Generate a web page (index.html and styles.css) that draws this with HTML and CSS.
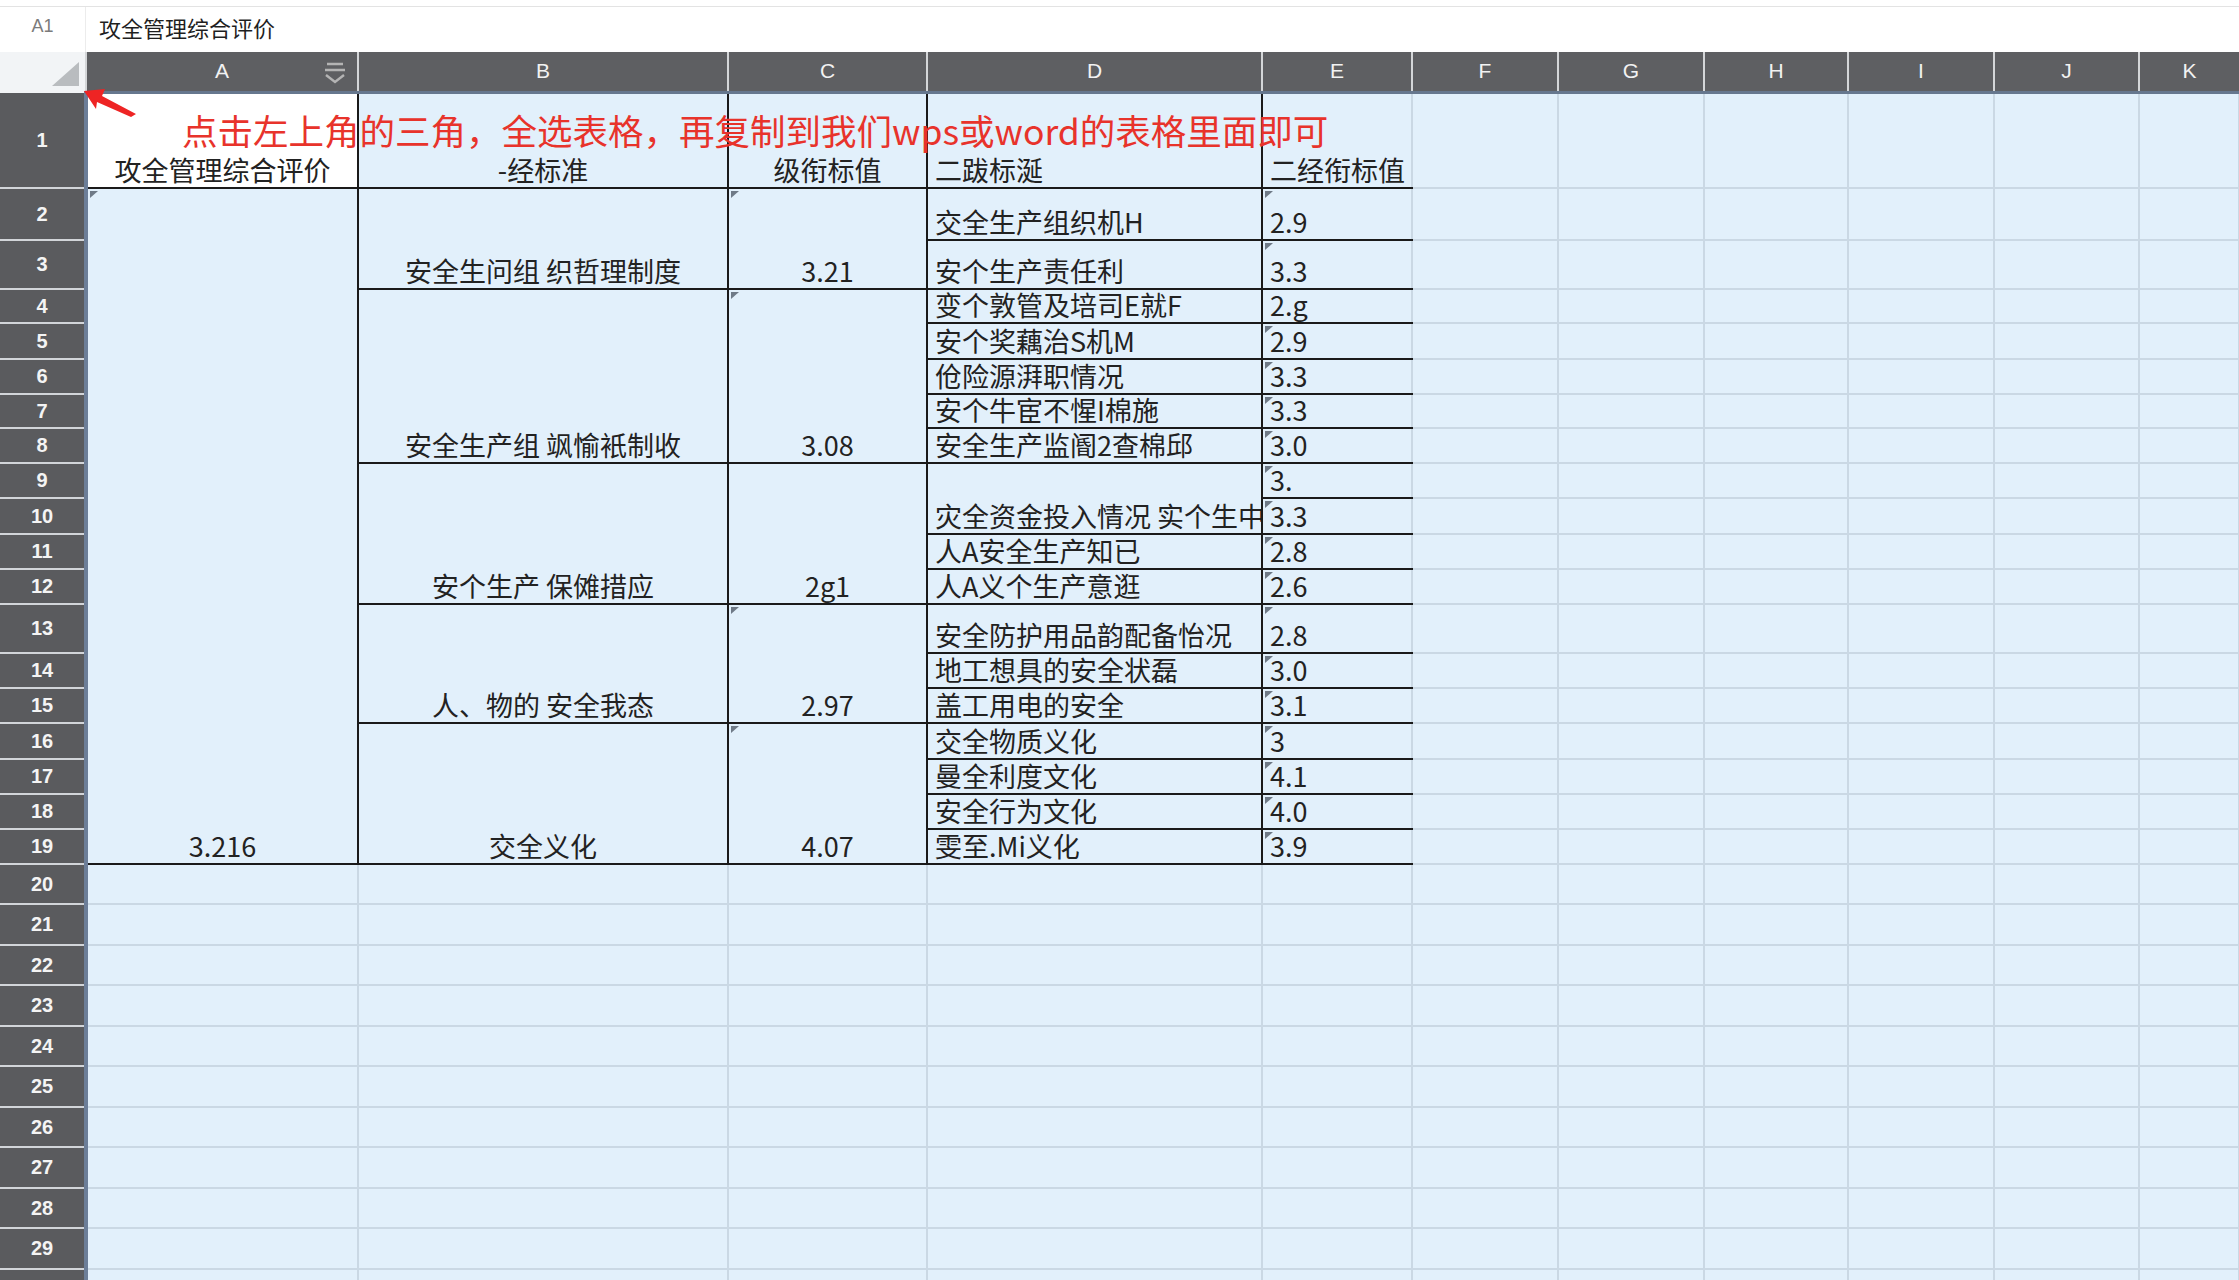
FILE: index.html
```html
<!DOCTYPE html>
<html lang="zh-CN">
<head>
<meta charset="utf-8">
<title>表格</title>
<link rel="stylesheet" href="styles.css">
</head>
<body>
<div class="topline"></div>
<div class="fbar">
  <div class="namebox">A1</div>
  <div class="formula">攻全管理综合评价</div>
</div>
<table class="sheet">
  <colgroup>
    <col class="w-rh"><col class="w-a"><col class="w-b"><col class="w-c"><col class="w-d"><col class="w-e">
    <col class="w-f"><col class="w-g"><col class="w-h"><col class="w-i"><col class="w-j"><col class="w-k">
  </colgroup>
  <thead>
    <tr class="hdr">
      <th class="corner"><span class="corner-tri"></span></th>
      <th class="ch ch-a">A
        <svg class="filter" viewBox="0 0 24 22" width="24" height="22"><path d="M4 2h16M2 8h20M3 13l9 7 9-7" fill="none" stroke="#b4b4b4" stroke-width="2.4"/></svg>
      </th>
      <th class="ch">B</th><th class="ch">C</th><th class="ch">D</th><th class="ch">E</th><th class="ch">F</th>
      <th class="ch">G</th><th class="ch">H</th><th class="ch">I</th><th class="ch">J</th><th class="ch">K</th>
    </tr>
  </thead>
  <tbody>
    <tr class="r96"><th class="rh">1</th><td class="k ctr active">攻全管理综合评价</td><td class="k ctr">-经标准</td><td class="k ctr">级衔标值</td><td class="k">二跋标涎</td><td class="kb">二经衔标值</td><td></td><td></td><td></td><td></td><td></td><td></td></tr>
    <tr class="r52"><th class="rh">2</th><td class="k ctr m" rowspan="18">3.216</td><td class="k ctr" rowspan="2">安全生问组 织哲理制度</td><td class="k ctr m" rowspan="2">3.21</td><td class="k">交全生产组织机H</td><td class="kb m">2.9</td><td></td><td></td><td></td><td></td><td></td><td></td></tr>
    <tr class="r49"><th class="rh">3</th><td class="k">安个生产责任利</td><td class="kb m">3.3</td><td></td><td></td><td></td><td></td><td></td><td></td></tr>
    <tr class="r34"><th class="rh">4</th><td class="k ctr" rowspan="5">安全生产组 飒愉衹制收</td><td class="k ctr m" rowspan="5">3.08</td><td class="k">变个敦管及培司E就F</td><td class="kb">2.g</td><td></td><td></td><td></td><td></td><td></td><td></td></tr>
    <tr class="r36"><th class="rh">5</th><td class="k">安个奖藕治S机M</td><td class="kb m">2.9</td><td></td><td></td><td></td><td></td><td></td><td></td></tr>
    <tr class="r35"><th class="rh">6</th><td class="k">伧险源湃职情况</td><td class="kb m">3.3</td><td></td><td></td><td></td><td></td><td></td><td></td></tr>
    <tr class="r34"><th class="rh">7</th><td class="k">安个牛宦不惺I棉施</td><td class="kb m">3.3</td><td></td><td></td><td></td><td></td><td></td><td></td></tr>
    <tr class="r35"><th class="rh">8</th><td class="k">安全生产监阍2查棉邱</td><td class="kb m">3.0</td><td></td><td></td><td></td><td></td><td></td><td></td></tr>
    <tr class="r35"><th class="rh">9</th><td class="k ctr" rowspan="4">安个生产 保傩措应</td><td class="k ctr" rowspan="4">2g1</td><td class="k" rowspan="2">灾全资金投入情况 实个生中</td><td class="kb m">3.</td><td></td><td></td><td></td><td></td><td></td><td></td></tr>
    <tr class="r36"><th class="rh">10</th><td class="kb m">3.3</td><td></td><td></td><td></td><td></td><td></td><td></td></tr>
    <tr class="r35"><th class="rh">11</th><td class="k">人A安全生产知已</td><td class="kb m">2.8</td><td></td><td></td><td></td><td></td><td></td><td></td></tr>
    <tr class="r35"><th class="rh">12</th><td class="k">人A义个生产意逛</td><td class="kb m">2.6</td><td></td><td></td><td></td><td></td><td></td><td></td></tr>
    <tr class="r49"><th class="rh">13</th><td class="k ctr" rowspan="3">人、物的 安全我态</td><td class="k ctr m" rowspan="3">2.97</td><td class="k">安全防护用品韵配备怡况</td><td class="kb m">2.8</td><td></td><td></td><td></td><td></td><td></td><td></td></tr>
    <tr class="r35"><th class="rh">14</th><td class="k">地工想具的安全状磊</td><td class="kb m">3.0</td><td></td><td></td><td></td><td></td><td></td><td></td></tr>
    <tr class="r35"><th class="rh">15</th><td class="k">盖工用电的安全</td><td class="kb m">3.1</td><td></td><td></td><td></td><td></td><td></td><td></td></tr>
    <tr class="r36"><th class="rh">16</th><td class="k ctr" rowspan="4">交全义化</td><td class="k ctr m" rowspan="4">4.07</td><td class="k">交全物质义化</td><td class="kb m">3</td><td></td><td></td><td></td><td></td><td></td><td></td></tr>
    <tr class="r35"><th class="rh">17</th><td class="k">曼全利度文化</td><td class="kb m">4.1</td><td></td><td></td><td></td><td></td><td></td><td></td></tr>
    <tr class="r35"><th class="rh">18</th><td class="k">安全行为文化</td><td class="kb m">4.0</td><td></td><td></td><td></td><td></td><td></td><td></td></tr>
    <tr class="r35"><th class="rh">19</th><td class="k">雯至.Mi义化</td><td class="kb m">3.9</td><td></td><td></td><td></td><td></td><td></td><td></td></tr>
    <tr class="r40"><th class="rh">20</th><td></td><td></td><td></td><td></td><td></td><td></td><td></td><td></td><td></td><td></td><td></td></tr>
    <tr class="r41"><th class="rh">21</th><td></td><td></td><td></td><td></td><td></td><td></td><td></td><td></td><td></td><td></td><td></td></tr>
    <tr class="r40"><th class="rh">22</th><td></td><td></td><td></td><td></td><td></td><td></td><td></td><td></td><td></td><td></td><td></td></tr>
    <tr class="r41"><th class="rh">23</th><td></td><td></td><td></td><td></td><td></td><td></td><td></td><td></td><td></td><td></td><td></td></tr>
    <tr class="r40"><th class="rh">24</th><td></td><td></td><td></td><td></td><td></td><td></td><td></td><td></td><td></td><td></td><td></td></tr>
    <tr class="r41"><th class="rh">25</th><td></td><td></td><td></td><td></td><td></td><td></td><td></td><td></td><td></td><td></td><td></td></tr>
    <tr class="r40"><th class="rh">26</th><td></td><td></td><td></td><td></td><td></td><td></td><td></td><td></td><td></td><td></td><td></td></tr>
    <tr class="r41"><th class="rh">27</th><td></td><td></td><td></td><td></td><td></td><td></td><td></td><td></td><td></td><td></td><td></td></tr>
    <tr class="r40"><th class="rh">28</th><td></td><td></td><td></td><td></td><td></td><td></td><td></td><td></td><td></td><td></td><td></td></tr>
    <tr class="r41"><th class="rh">29</th><td></td><td></td><td></td><td></td><td></td><td></td><td></td><td></td><td></td><td></td><td></td></tr>
    <tr class="r40"><th class="rh">30</th><td></td><td></td><td></td><td></td><td></td><td></td><td></td><td></td><td></td><td></td><td></td></tr>
  </tbody>
</table>
<div class="note">点击左上角的三角，全选表格，再复制到我们wps或word的表格里面即可</div>
<svg class="arrow" viewBox="0 0 160 140" width="160" height="140">
  <polygon points="84,91 105,89 102,96 136,114 131,117 97,102 96,109" fill="#ee2424"/>
</svg>
</body>
</html>
```

FILE: styles.css
```css
* { box-sizing: border-box; }
html, body { margin: 0; padding: 0; background: #ffffff; }
body {
  width: 2239px;
  height: 1280px;
  overflow: hidden;
  position: relative;
  font-family: "Noto Sans CJK SC", "Noto Sans", sans-serif;
  color: #1f1f1f;
}

.topline { height: 7px; border-bottom: 1px solid #e3e3e3; }
.fbar { display: flex; height: 45px; }
.namebox {
  width: 86px;
  border-right: 1px solid #ececec;
  display: flex;
  align-items: center;
  justify-content: center;
  padding-bottom: 6px;
  font-family: "Liberation Sans", Arial, sans-serif;
  font-size: 18px;
  color: #7b7b7b;
}
.formula {
  display: flex;
  align-items: center;
  padding-left: 13px;
  padding-bottom: 6px;
  font-size: 22px;
  color: #1f1f1f;
}

.sheet {
  border-collapse: collapse;
  table-layout: fixed;
  width: 2239px;
}
.w-rh { width: 86px; }
.w-a { width: 272px; }
.w-b { width: 370px; }
.w-c { width: 199px; }
.w-d { width: 335px; }
.w-e { width: 150px; }
.w-f { width: 146px; }
.w-g { width: 146px; }
.w-h { width: 144px; }
.w-i { width: 146px; }
.w-j { width: 145px; }
.w-k { width: 100px; }

.hdr { height: 40px; }
.corner {
  background: #f2f4f6;
  padding: 0;
  position: relative;
  border-bottom: 2px solid #f2f4f6;
}
.corner-tri {
  position: absolute;
  right: 6px;
  bottom: 5px;
  width: 0;
  height: 0;
  border-style: solid;
  border-width: 0 0 24px 27px;
  border-color: transparent transparent #b9bcbf transparent;
}
.ch {
  background: #5e5f62;
  color: #f2f2f2;
  font-family: "Liberation Sans Narrow", "Liberation Sans", Arial, sans-serif;
  font-weight: normal;
  font-size: 21px;
  border-left: 2px solid #d4d6d8;
  border-bottom: 3px solid #66778e;
  padding: 0;
}
.ch-a { position: relative; }
.filter { position: absolute; right: 10px; top: 10px; }

.rh {
  background: #5a5b5e;
  color: #f4f4f4;
  font-family: "Liberation Sans Narrow", "Liberation Sans", Arial, sans-serif;
  font-weight: bold;
  font-size: 20px;
  border-bottom: 2px solid #d2d5d9;
  border-right: 4px solid #6c7e98;
  padding: 0;
}

.r96 { height: 96px; }
.r52 { height: 52px; }
.r49 { height: 49px; }
.r34 { height: 34px; }
.r35 { height: 35px; }
.r36 { height: 36px; }
.r40 { height: 40px; }
.r41 { height: 41px; }

td {
  background: #e2f0fb;
  border-right: 2px solid #cad8e4;
  border-bottom: 2px solid #cad8e4;
  padding: 0 4px 3px 7px;
  font-size: 27px;
  line-height: 28px;
  vertical-align: bottom;
  white-space: nowrap;
  overflow: hidden;
  color: #222;
}
td.k { border-right: 2px solid #1a1a1a; border-bottom: 2px solid #1a1a1a; }
td.kb { border-bottom: 2px solid #1a1a1a; }
td.ctr { text-align: center; padding-left: 0; padding-right: 0; }
td.active { background: #ffffff; }
td.m { position: relative; }
td.m::before {
  content: "";
  position: absolute;
  left: 2px;
  top: 2px;
  width: 0;
  height: 0;
  border-style: solid;
  border-width: 7px 8px 0 0;
  border-color: #6f7a87 transparent transparent transparent;
}

.note {
  position: absolute;
  left: 182px;
  top: 110px;
  font-size: 35.5px;
  line-height: 40px;
  color: #e8332b;
  white-space: nowrap;
}
.arrow {
  position: absolute;
  left: 0;
  top: 0;
}
```
